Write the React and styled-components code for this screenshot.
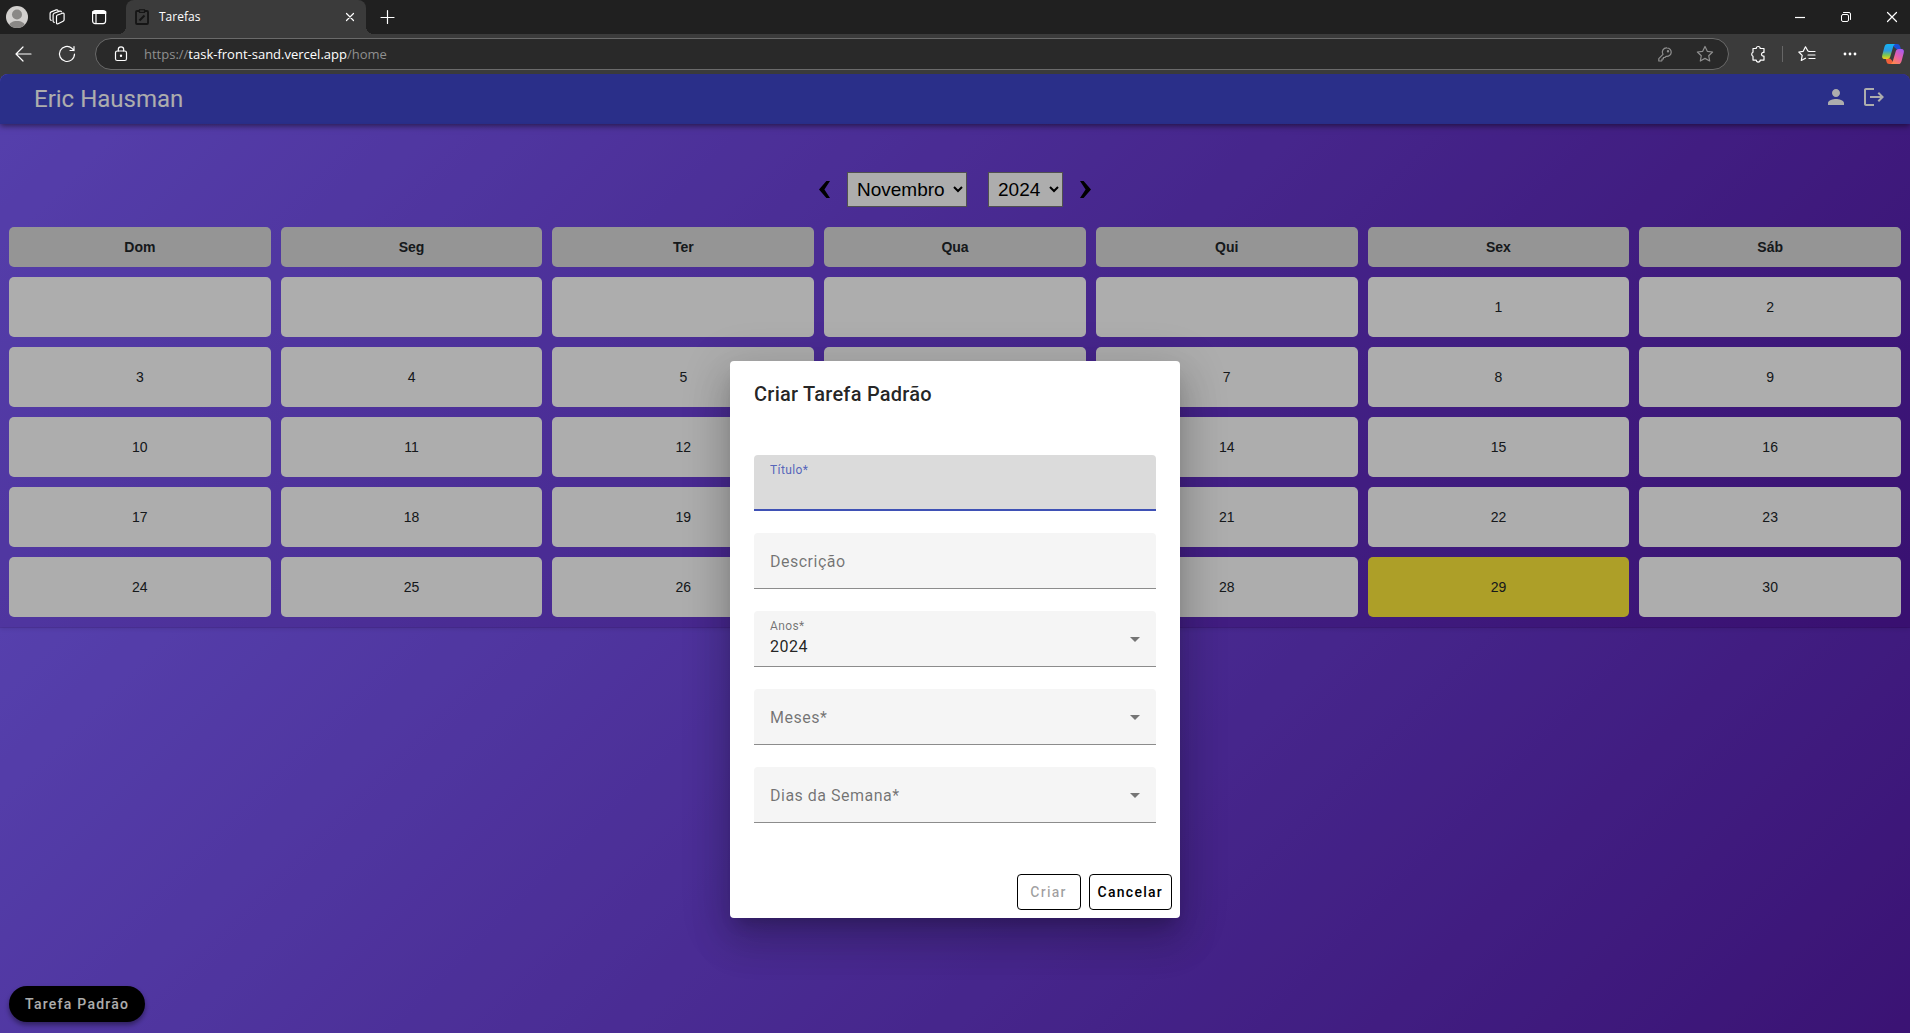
import React, { useState } from 'react';
import styled, { createGlobalStyle, css } from 'styled-components';
import { MdPerson, MdLogout } from 'react-icons/md';

const roboto = css`font-family: Roboto, "Helvetica Neue", sans-serif;`;

const GlobalStyle = createGlobalStyle`
  * { box-sizing: border-box; }
  body {
    margin: 0;
    background: #202020;
    font-family: Roboto, "Helvetica Neue", sans-serif;
  }
  button { font: inherit; cursor: pointer; }
`;

const Window = styled.div`
  display: flex;
  flex-direction: column;
  min-height: 100vh;
  background: #3b3b3b;
`;

/* ---------- browser frame ---------- */

const TabStrip = styled.header`
  display: flex;
  align-items: center;
  height: 34px;
  padding: 0 6px;
  background: #202020;
  color: #ffffff;
  font: 12px/16px "Open Sans", "Segoe UI", sans-serif;
`;

const StripTools = styled.div`
  display: flex;
  align-items: center;
  gap: 20px;
  margin-right: 18px;
`;

const IconButton = styled.button`
  display: flex;
  align-items: center;
  justify-content: center;
  flex: none;
  width: ${(p) => p.$size || 20}px;
  height: ${(p) => p.$size || 20}px;
  padding: 0;
  border: 0;
  background: none;
  color: ${(p) => p.$color || '#ffffff'};
`;

const Tab = styled.div`
  position: relative;
  display: flex;
  align-items: center;
  align-self: stretch;
  gap: 10px;
  width: 240px;
  padding: 0 6px 0 9px;
  border-radius: 8px 8px 0 0;
  background: #3b3b3b;

  &::before,
  &::after {
    content: "";
    position: absolute;
    bottom: 0;
    width: 8px;
    height: 8px;
  }
  &::before {
    right: 100%;
    background: radial-gradient(circle at 0 0, #202020 8px, #3b3b3b 8px);
  }
  &::after {
    left: 100%;
    background: radial-gradient(circle at 100% 0, #202020 8px, #3b3b3b 8px);
  }
`;

const TabTitle = styled.span`
  flex: 1;
`;

const NewTab = styled.div`
  flex: 1;
  margin-left: 11px;
`;

const WindowControls = styled.div`
  display: flex;
  gap: 26px;
  margin-right: 2px;
`;

const Toolbar = styled.div`
  display: flex;
  align-items: center;
  height: 40px;
  padding: 0 5px 0 13px;
  background: #3b3b3b;
`;

const NavButtons = styled.div`
  display: flex;
  gap: 24px;
  margin-right: 18px;
`;

const AddressBar = styled.div`
  display: flex;
  flex: 1;
  align-items: center;
  gap: 13px;
  height: 32px;
  padding: 0 13px 0 15px;
  border: 1px solid #6a6a6a;
  border-radius: 16px;
  background: #292929;
`;

const Url = styled.a`
  flex: 1;
  color: #8f8f8f;
  font: 13px/20px "Open Sans", "Segoe UI", sans-serif;
  text-decoration: none;

  strong {
    color: #ffffff;
    font-weight: 400;
  }
`;

const BarActions = styled.div`
  display: flex;
  align-items: center;
  gap: 20px;
`;

const BrowserActions = styled.div`
  display: flex;
  align-items: center;
  gap: 22px;
  margin-left: 19px;
`;

const ExtensionGroup = styled.div`
  display: flex;
  align-items: center;
  gap: 14px;
`;

const Divider = styled.span`
  width: 1px;
  height: 16px;
  background: #666666;
`;

/* ---------- calendar page ---------- */

const Page = styled.div`
  position: relative;
  display: flex;
  flex: 1;
  flex-direction: column;
  overflow: hidden;
  border-radius: 8px 8px 0 0;
  background: linear-gradient(135deg, #7f5fff, #5418a6) 0 0 / 100% 554px;
`;

const AppBar = styled.header`
  display: flex;
  align-items: center;
  justify-content: space-between;
  height: 50px;
  padding: 0 24px 0 34px;
  background: #3e46cb;
  box-shadow: 0 2px 6px rgba(0, 0, 0, 0.5);
  color: #ffffff;
`;

const UserName = styled.h1`
  margin: 0;
  ${roboto}
  font-size: 24px;
  font-weight: 400;
  line-height: 32px;
`;

const AppActions = styled.nav`
  display: flex;
  gap: 14px;
  padding-bottom: 4px;
`;

const Calendar = styled.main`
  padding: 48px 9px 10px;
  box-shadow: 0 2px 4px rgba(0, 0, 0, 0.1);
`;

const MonthNav = styled.div`
  display: flex;
  align-items: center;
  justify-content: center;
  gap: 17px;
  margin-bottom: 20px;
`;

const Selectors = styled.div`
  display: flex;
  gap: 21px;
`;

const DateSelect = styled.select`
  height: 35px;
  padding: 5px;
  border: 1px solid #767676;
  border-radius: 0;
  background: #ffffff;
  color: #000000;
  font: 19px "Liberation Sans", Arial, sans-serif;
`;

const ArrowButton = styled.button`
  display: flex;
  padding: 0;
  border: 0;
  background: none;
  color: #000000;
`;

const Month = styled.table`
  display: block;
  font: 14px/20px "Liberation Sans", Arial, sans-serif;
  color: #212529;

  thead,
  tbody {
    display: grid;
    gap: 10px;
  }
  thead {
    margin-bottom: 10px;
  }
  tr {
    display: grid;
    grid-template-columns: repeat(7, 1fr);
    gap: 10px;
  }
`;

const Weekday = styled.th`
  padding: 10px;
  border-radius: 5px;
  background: #dcdcdc;
  text-align: center;
`;

const Day = styled.td`
  height: 60px;
  padding: 20px;
  border-radius: 5px;
  background: ${(p) => (p.$today ? '#ffeb3b' : '#ffffff')};
  text-align: center;
`;

const FloatingButton = styled.button`
  position: absolute;
  bottom: 11px;
  left: 9px;
  height: 36px;
  padding: 0 16px;
  border: 0;
  border-radius: 18px;
  background: #000000;
  box-shadow: 0 3px 5px rgba(0, 0, 0, 0.4);
  color: #ffffff;
  ${roboto}
  font-size: 14px;
  font-weight: 500;
  letter-spacing: 0.09em;
`;

/* ---------- dialog ---------- */

const Backdrop = styled.div`
  position: absolute;
  inset: 0;
  display: flex;
  align-items: flex-start;
  justify-content: center;
  padding-top: 287px;
  background: rgba(0, 0, 0, 0.32);
`;

const Dialog = styled.form`
  width: 450px;
  border-radius: 4px;
  background: #ffffff;
  box-shadow:
    0 11px 15px -7px rgba(0, 0, 0, 0.2),
    0 24px 38px 3px rgba(0, 0, 0, 0.14),
    0 9px 46px 8px rgba(0, 0, 0, 0.12);
`;

const DialogTitle = styled.h2`
  margin: 0;
  padding: 17px 24px 0;
  color: rgba(0, 0, 0, 0.87);
  ${roboto}
  font-size: 20px;
  font-weight: 500;
  line-height: 32px;
  letter-spacing: 0.0125em;
`;

const Fields = styled.div`
  display: grid;
  gap: 22px;
  padding: 45px 24px 51px;
`;

const Field = styled.div`
  position: relative;
  height: 56px;
  border-bottom: ${(p) => (p.$active ? '2px solid #3f51b5' : '1px solid #8c8c8c')};
  border-radius: 4px 4px 0 0;
  background: ${(p) => (p.$active ? '#dbdbdb' : '#f5f5f5')};
`;

const FieldLabel = styled.label`
  position: absolute;
  top: ${(p) => (p.$floating ? 7 : 19)}px;
  left: 16px;
  color: ${(p) => (p.$active ? 'rgba(63, 81, 181, 0.87)' : 'rgba(0, 0, 0, 0.54)')};
  ${roboto}
  font-size: ${(p) => (p.$floating ? 12 : 16)}px;
  line-height: ${(p) => (p.$floating ? 16 : 20)}px;
  letter-spacing: 0.03125em;
  pointer-events: none;
`;

const control = css`
  display: block;
  width: 100%;
  height: 100%;
  padding: 23px 16px 7px;
  border: 0;
  outline: 0;
  background: none;
  appearance: none;
  color: rgba(0, 0, 0, 0.87);
  ${roboto}
  font-size: 16px;
  letter-spacing: 0.03125em;
`;

const TextInput = styled.input`${control}`;
const SelectInput = styled.select`${control}`;

const Caret = styled.svg`
  position: absolute;
  top: 26px;
  right: 16px;
  pointer-events: none;
`;

const DialogActions = styled.footer`
  display: flex;
  justify-content: flex-end;
  gap: 8px;
  padding: 0 8px 8px;
`;

const OutlineButton = styled.button`
  min-width: 64px;
  height: 36px;
  padding: 0 8px;
  border: 1px solid #000000;
  border-radius: 4px;
  background: #ffffff;
  color: #000000;
  ${roboto}
  font-size: 14px;
  font-weight: 500;
  letter-spacing: 0.09em;

  &:disabled {
    color: rgba(0, 0, 0, 0.38);
  }
`;

/* ---------- drawings ---------- */

const Line = ({ size = 18, box = 18, width = 1.2, children }) => (
  <svg width={size} height={size} viewBox={`0 0 ${box} ${box}`} fill="none" stroke="currentColor"
    strokeWidth={width} strokeLinecap="round" strokeLinejoin="round" aria-hidden="true">
    {children}
  </svg>
);

const Avatar = () => (
  <svg width="22" height="22" viewBox="0 0 22 22" aria-hidden="true">
    <defs><clipPath id="avatar"><circle cx="11" cy="11" r="11" /></clipPath></defs>
    <g clipPath="url(#avatar)">
      <rect width="22" height="22" fill="#d2d0ce" />
      <circle cx="11" cy="8.5" r="5" fill="#8a8886" />
      <path d="M3 22v-2c0-3 3.500-5 8-5s8 2 8 5v2z" fill="#8a8886" />
    </g>
  </svg>
);

const Workspaces = () => (
  <Line>
    <path d="M7.500 8.500q0-1.100 1-1.500l5-1.800q1.600-.4 1.600 1.100v5.400q0 1.100-1 1.500l-5 2.600q-1.600.5-1.600-1zM5.200 14.300q-1.100-.2-1.100-1.400V7q0-1.200 1-1.700l5.600-2.200q1.500-.3 1.800.7M2.200 12.300Q1.100 12 1.100 10.900V5.600q0-1.300 1.100-1.700l5-2q1.300-.4 1.800.6" />
  </Line>
);

const TabActions = () => (
  <Line>
    <rect x="3.600" y="2.600" width="13" height="13" rx="2.500" />
    <path d="M4 4h12.500M4 5h12.500" strokeWidth="1.800" />
    <path d="M7 6v9.500" />
  </Line>
);

const Favicon = () => (
  <svg width="14" height="16" viewBox="0 0 14 16" fill="none" stroke="#151515" aria-hidden="true">
    <rect x="1" y="2" width="12" height="13" rx="1" strokeWidth="1.800" />
    <rect x="4.500" y="0.800" width="5" height="2.600" fill="#3b3b3b" strokeWidth="1.200" />
    <path d="m4.500 11.500 5-5" strokeWidth="2" />
  </svg>
);

const Copilot = () => (
  <svg width="24" height="24" viewBox="0 0 24 24" aria-hidden="true">
    <defs>
      <linearGradient id="coA" x1="0" y1="0" x2="0" y2="1">
        <stop offset="0" stopColor="#12b5f5" /><stop offset=".45" stopColor="#2f9ae0" />
        <stop offset=".75" stopColor="#7fc84b" /><stop offset="1" stopColor="#f4cf1c" />
      </linearGradient>
      <linearGradient id="coB" x1=".8" y1="0" x2=".2" y2="1">
        <stop offset="0" stopColor="#a65af0" /><stop offset=".5" stopColor="#e85fa8" />
        <stop offset="1" stopColor="#ff8a4a" />
      </linearGradient>
    </defs>
    <path d="M11 2h5.200c1.500 0 2.300.8 2.800 2.200L20 7.500h-4L13 5z" fill="#1b4fd6" />
    <path d="M13 22H8.200c-1.500 0-2.300-.8-2.700-2.200L4.600 16.500H9l2 2z" fill="#f0603a" />
    <path d="M6.500 2h7.800c-1.300.5-1.800 1.600-2.200 3l-2.800 9.600c-.5 1.500-1.200 2.400-2.900 2.400H3.500C1.200 17 .7 15 1.300 12.900l2.100-7.800C4 3.200 4.800 2 6.500 2z" fill="url(#coA)" />
    <path d="M17.500 22H9.700c1.300-.5 1.800-1.600 2.200-3l2.800-9.600C15.200 7.900 15.900 7 17.600 7h2.900c2.300 0 2.800 2 2.200 4.100l-2.100 7.800c-.6 1.900-1.400 3.100-3.100 3.100z" fill="url(#coB)" />
  </svg>
);

const starPath = 'M9 1.500 11.300 6.300 16.600 7 12.700 10.700 13.700 16 9 13.400 4.300 16 5.300 10.700 1.400 7 6.700 6.300z';

const Chevron = ({ flip }) => (
  <svg width="11" height="17" viewBox="0 0 11 17" fill="currentColor" aria-hidden="true">
    <path d={flip ? 'M0 0h3.600L11 8.500 3.600 17H0l5.600-8.500z' : 'M11 0H7.400L0 8.500 7.400 17H11L5.400 8.500z'} />
  </svg>
);

/* ---------- data ---------- */

const weekdays = ['Dom', 'Seg', 'Ter', 'Qua', 'Qui', 'Sex', 'Sáb'];
const months = ['Janeiro', 'Fevereiro', 'Março', 'Abril', 'Maio', 'Junho', 'Julho', 'Agosto',
  'Setembro', 'Outubro', 'Novembro', 'Dezembro'];
const years = ['2023', '2024', '2025'];
const firstWeekday = 5;
const today = 29;
const weeks = Array.from({ length: 5 }, (_, w) =>
  Array.from({ length: 7 }, (_, d) => {
    const day = w * 7 + d - firstWeekday + 1;
    return day > 0 ? day : null;
  }));

function SelectField({ id, label, options, initial = '' }) {
  const [value, setValue] = useState(initial);
  return (
    <Field>
      <FieldLabel htmlFor={id} $floating={value !== ''}>{label}</FieldLabel>
      <SelectInput id={id} value={value} onChange={(e) => setValue(e.target.value)}>
        <option value="" />
        {options.map((o) => <option key={o}>{o}</option>)}
      </SelectInput>
      <Caret width="10" height="5" viewBox="0 0 10 5" aria-hidden="true">
        <path d="m0 0 5 5 5-5z" fill="#757575" />
      </Caret>
    </Field>
  );
}

function BrowserFrame() {
  return (
    <>
      <TabStrip>
        <StripTools>
          <IconButton $size={22} aria-label="Perfil"><Avatar /></IconButton>
          <IconButton aria-label="Workspaces"><Workspaces /></IconButton>
          <IconButton aria-label="Guias"><TabActions /></IconButton>
        </StripTools>
        <Tab>
          <Favicon />
          <TabTitle>Tarefas</TabTitle>
          <IconButton aria-label="Fechar guia">
            <Line><path d="m5.500 5.500 7 7m0-7-7 7" /></Line>
          </IconButton>
        </Tab>
        <NewTab>
          <IconButton aria-label="Nova guia">
            <Line><path d="M9.500 2.500v13M3 9.500h13" /></Line>
          </IconButton>
        </NewTab>
        <WindowControls>
          <IconButton aria-label="Minimizar"><Line><path d="M4 9.500h10" strokeLinecap="butt" /></Line></IconButton>
          <IconButton aria-label="Restaurar">
            <Line width={1}>
              <rect x="4.500" y="6.500" width="7" height="7" rx="1.500" />
              <path d="M6.500 4.500H12q1.500 0 1.500 1.500v5.500" />
            </Line>
          </IconButton>
          <IconButton aria-label="Fechar"><Line><path d="m4.500 4.500 9 9m0-9-9 9" /></Line></IconButton>
        </WindowControls>
      </TabStrip>
      <Toolbar>
        <NavButtons>
          <IconButton aria-label="Voltar">
            <Line><path d="M17 9H2m7-7L2 9l7 7" /></Line>
          </IconButton>
          <IconButton aria-label="Recarregar">
            <Line><path d="M16.500 9A7.500 7.500 0 1 1 13.800 3.200L16 5.500M16 1.500v4h-4" /></Line>
          </IconButton>
        </NavButtons>
        <AddressBar>
          <IconButton aria-label="Informações do site">
            <Line>
              <rect x="3.500" y="6" width="11" height="9.500" rx="1.800" />
              <path d="M6.300 6V4.500a2.700 2.700 0 0 1 5.400 0V6" />
              <circle cx="9" cy="10.800" r=".6" fill="currentColor" />
            </Line>
          </IconButton>
          <Url href="#home">https://<strong>task-front-sand.vercel.app</strong>/home</Url>
          <BarActions>
            <IconButton $color="#8f8f8f" aria-label="Senhas">
              <Line>
                <path d="M11 2.800a4.300 4.300 0 1 1-1 8.500l-1.200 1.200H7.400v1.500H6v1.500l-.5.500H2.800V13.600L7 9.400A4.300 4.300 0 0 1 11 2.800z" />
                <circle cx="12" cy="6.300" r=".6" />
              </Line>
            </IconButton>
            <IconButton $color="#8f8f8f" aria-label="Favoritar">
              <Line><path d={starPath} /></Line>
            </IconButton>
          </BarActions>
        </AddressBar>
        <BrowserActions>
          <ExtensionGroup>
            <IconButton aria-label="Extensões">
              <Line>
                <path d="M4 3.500h3.200a2 2 0 0 1 4 0H15v4a1.900 1.900 0 1 0 0 3.600v4h-3.800a2 2 0 0 1-4 0H4v-3.800a2.200 2.200 0 0 1 0-4z" />
              </Line>
            </IconButton>
            <Divider />
            <IconButton aria-label="Favoritos">
              <Line>
                <path d="M11 6.300 9.900 6 7.500 1.800 5.200 6.300.8 7l3.400 3.400L3.300 15.500l4.200-2.300M11 6.500h6M10 10h7M11 13.500h6" />
              </Line>
            </IconButton>
          </ExtensionGroup>
          <IconButton aria-label="Mais opções">
            <svg width="18" height="18" viewBox="0 0 18 18" fill="currentColor" aria-hidden="true">
              <circle cx="5" cy="9" r="1.400" /><circle cx="10" cy="9" r="1.400" /><circle cx="15" cy="9" r="1.400" />
            </svg>
          </IconButton>
          <IconButton $size={24} aria-label="Copilot"><Copilot /></IconButton>
        </BrowserActions>
      </Toolbar>
    </>
  );
}

export default function App() {
  const [title, setTitle] = useState('');
  const [description, setDescription] = useState('');
  return (
    <Window>
      <GlobalStyle />
      <BrowserFrame />
      <Page>
        <AppBar>
          <UserName>Eric Hausman</UserName>
          <AppActions>
            <IconButton $size={24} aria-label="Usuário"><MdPerson size={24} /></IconButton>
            <IconButton $size={24} aria-label="Sair"><MdLogout size={24} /></IconButton>
          </AppActions>
        </AppBar>
        <Calendar>
          <MonthNav>
            <ArrowButton aria-label="Mês anterior"><Chevron /></ArrowButton>
            <Selectors>
              <DateSelect aria-label="Mês" defaultValue="Novembro">
                {months.map((m) => <option key={m}>{m}</option>)}
              </DateSelect>
              <DateSelect aria-label="Ano" defaultValue="2024">
                {years.map((y) => <option key={y}>{y}</option>)}
              </DateSelect>
            </Selectors>
            <ArrowButton aria-label="Próximo mês"><Chevron flip /></ArrowButton>
          </MonthNav>
          <Month>
            <thead>
              <tr>{weekdays.map((d) => <Weekday key={d} scope="col">{d}</Weekday>)}</tr>
            </thead>
            <tbody>
              {weeks.map((week, w) => (
                <tr key={w}>
                  {week.map((day, d) => <Day key={d} $today={day === today}>{day}</Day>)}
                </tr>
              ))}
            </tbody>
          </Month>
        </Calendar>
        <FloatingButton>Tarefa Padrão</FloatingButton>
        <Backdrop>
          <Dialog role="dialog" aria-labelledby="dialog-title" onSubmit={(e) => e.preventDefault()}>
            <DialogTitle id="dialog-title">Criar Tarefa Padrão</DialogTitle>
            <Fields>
              <Field $active>
                <FieldLabel htmlFor="title" $floating $active>Título*</FieldLabel>
                <TextInput id="title" value={title} onChange={(e) => setTitle(e.target.value)} />
              </Field>
              <Field>
                <FieldLabel htmlFor="description" $floating={description !== ''}>Descrição</FieldLabel>
                <TextInput id="description" value={description} onChange={(e) => setDescription(e.target.value)} />
              </Field>
              <SelectField id="year" label="Anos*" options={years} initial="2024" />
              <SelectField id="month" label="Meses*" options={months} />
              <SelectField id="weekday" label="Dias da Semana*" options={weekdays} />
            </Fields>
            <DialogActions>
              <OutlineButton type="submit" disabled>Criar</OutlineButton>
              <OutlineButton type="button">Cancelar</OutlineButton>
            </DialogActions>
          </Dialog>
        </Backdrop>
      </Page>
    </Window>
  );
}
